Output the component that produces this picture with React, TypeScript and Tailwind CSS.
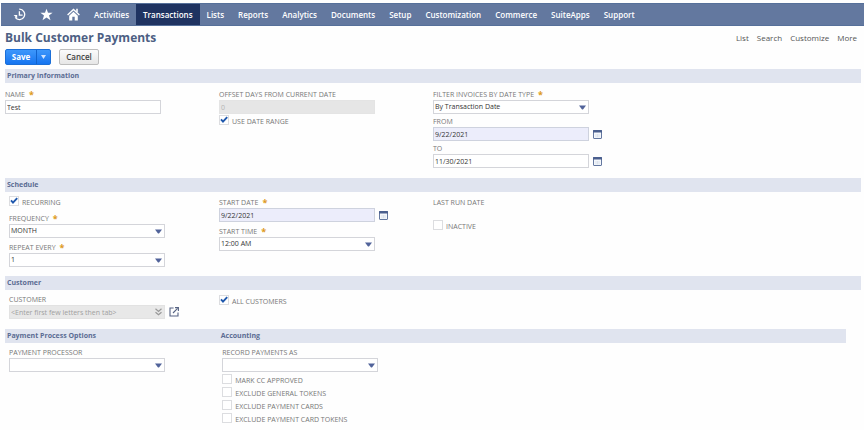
import { FC, ReactNode, useId, useState } from 'react';

const menuItems: string[] = [
  'Activities',
  'Transactions',
  'Lists',
  'Reports',
  'Analytics',
  'Documents',
  'Setup',
  'Customization',
  'Commerce',
  'SuiteApps',
  'Support',
];

const pageLinks: string[] = ['List', 'Search', 'Customize', 'More'];

const FieldLabel: FC<{ id?: string; text: string; required?: boolean }> = ({ id, text, required }) => (
  <label htmlFor={id} className="flex h-[10px] items-center whitespace-nowrap text-[7px] leading-[10px] text-[#777]">
    {text}
    {required && <span className="ml-1 text-[9px] font-bold leading-[8px] text-[#dd9a1c]">*</span>}
  </label>
);

const CalendarIcon: FC = () => (
  <svg width="9" height="9" viewBox="0 0 9 9" fill="none">
    <rect x="0.5" y="0.5" width="8" height="8" rx="0.5" fill="#f4f7fb" stroke="#6478a0" />
    <rect x="0" y="0" width="9" height="2.6" rx="0.5" fill="#4a5f8e" />
    <path d="M3 4v3.4M4.5 4v3.4M6 4v3.4" stroke="#c9d3e2" strokeWidth="0.6" />
  </svg>
);

interface TextFieldProps {
  label: string;
  value?: string;
  required?: boolean;
  disabled?: boolean;
  highlighted?: boolean;
  calendar?: boolean;
}

const TextField: FC<TextFieldProps> = ({ label, value = '', required, disabled, highlighted, calendar }) => {
  const id = useId();
  const [text, setText] = useState<string>(value);

  return (
    <div>
      <FieldLabel id={id} text={label} required={required} />
      <div className="flex items-center gap-1">
        <input
          id={id}
          type="text"
          value={text}
          disabled={disabled}
          onChange={(e) => setText(e.target.value)}
          className={`h-[14px] w-[156px] border px-[1px] text-[7px] leading-[12px] outline-none ${
            disabled
              ? 'border-[#e4e4e4] bg-[#e6e6e6] text-[#b5b5b5]'
              : highlighted
                ? 'border-[#ced2de] bg-[#ecedfb] text-[#333]'
                : 'border-[#d4d5da] bg-white text-[#333]'
          }`}
        />
        {calendar && (
          <button type="button" aria-label={`Pick ${label}`} className="cursor-pointer">
            <CalendarIcon />
          </button>
        )}
      </div>
    </div>
  );
};

interface SelectFieldProps {
  label: string;
  options: string[];
  required?: boolean;
}

const SelectField: FC<SelectFieldProps> = ({ label, options, required }) => {
  const id = useId();

  return (
    <div>
      <FieldLabel id={id} text={label} required={required} />
      <div className="relative w-[156px]">
        <select
          id={id}
          className="block h-[14px] w-full appearance-none border border-[#d4d5da] bg-white px-[1px] text-[7px] leading-[12px] text-[#333] outline-none"
        >
          {options.map((option) => (
            <option key={option}>{option}</option>
          ))}
        </select>
        <svg width="7" height="5" viewBox="0 0 7 5" className="pointer-events-none absolute right-[3px] top-[5px]">
          <path d="M0 0.4h7L4.2 4.2q-0.7 0.7-1.4 0z" fill="#51639a" />
        </svg>
      </div>
    </div>
  );
};

const CheckField: FC<{ label: string; checked?: boolean }> = ({ label, checked = false }) => {
  const [value, setValue] = useState<boolean>(checked);

  return (
    <label className="flex h-[13px] items-start gap-[3px] whitespace-nowrap text-[7px] leading-[14px] text-[#777]">
      <span className="relative block size-[10px]">
        <input
          type="checkbox"
          checked={value}
          onChange={(e) => setValue(e.target.checked)}
          className="block size-[10px] appearance-none border border-[#dcdde0] bg-white"
        />
        {value && (
          <svg width="8" height="8" viewBox="0 0 8 8" fill="none" className="pointer-events-none absolute left-[1px] top-[1px]">
            <path d="M1 3.4l2 2.2L7.2 1.2" stroke="#1f58ad" strokeWidth="1.9" />
          </svg>
        )}
      </span>
      {label}
    </label>
  );
};

const SectionBar: FC<{ children: ReactNode }> = ({ children }) => (
  <h2 className="h-[14px] bg-[#e0e4ef] pl-[2px] text-[7px] font-bold leading-[14px] text-[#5b6c93]">{children}</h2>
);

const App: FC = () => {
  return (
    <div className="min-h-screen bg-[#fefefe] pt-[3px] font-['Open_Sans','Noto_Sans',sans-serif]">
      <nav className="ml-[1px] flex h-[23px] items-stretch border-y border-[#56709a] bg-[#63789f] pl-[5px] text-[8px] font-semibold text-white">
        <a href="#" aria-label="Recent records" className="flex items-center px-[7px]">
          <svg width="13" height="13" viewBox="0 0 13 13" fill="none" stroke="#fff" strokeWidth="1.3">
            <path d="M6.2 1.2A5.2 5.2 0 1 1 2.2 9.4" />
            <path d="M6.4 3.2v4h3.2" />
            <path d="M0.6 7h3.6v3.4z" fill="#fff" stroke="none" />
          </svg>
        </a>
        <a href="#" aria-label="Shortcuts" className="flex items-center px-[7px]">
          <svg width="13" height="13" viewBox="0 0 13 13" fill="#fff">
            <path d="M6.5 0.8l1.5 4h4.6L9 7.5l1.5 4.7-4-2.8-4 2.8L4 7.5 0.4 4.8H5z" />
          </svg>
        </a>
        <a href="#" aria-label="Home" className="flex items-center px-[7px]">
          <svg width="13" height="13" viewBox="0 0 13 13" fill="none" stroke="#fff">
            <path d="M0.6 7L6.5 1.4 12.4 7" strokeWidth="1.4" />
            <path d="M10 0.8v3.4" strokeWidth="1.6" />
            <path d="M2.2 7.8l4.3-4 4.3 4v4.8H7.7V8.8H5.3v3.8H2.2z" fill="#fff" stroke="none" />
          </svg>
        </a>
        {menuItems.map((item) => (
          <a
            key={item}
            href="#"
            className={`flex items-center px-[7px] ${item === 'Transactions' ? 'bg-[#1f3361]' : ''}`}
          >
            {item}
          </a>
        ))}
      </nav>

      <main className="pl-[5px] pr-[3px]">
        <div className="flex h-[23px] items-center justify-between pr-1">
          <h1 className="text-[12px] font-bold text-[#4d5f83]">Bulk Customer Payments</h1>
          <div className="flex gap-2 text-[8px] text-[#555]">
            {pageLinks.map((link) => (
              <a key={link} href="#">
                {link}
              </a>
            ))}
          </div>
        </div>

        <div className="mb-1 flex h-4 gap-2 text-[8px]">
          <div className="flex rounded-[2px] border border-[#1b6fd8] bg-linear-to-b from-[#3d97fb] to-[#1575f0] font-bold text-white">
            <button type="button" className="w-[31px] border-r border-[#1263cc]">
              Save
            </button>
            <button type="button" aria-label="More save options" className="flex w-[13px] items-center justify-center">
              <svg width="5" height="4" viewBox="0 0 5 4" fill="#cfe4ff">
                <path d="M0 0h5L2.5 4z" />
              </svg>
            </button>
          </div>
          <button
            type="button"
            className="w-10 rounded-[2px] border border-[#bdbdbd] bg-linear-to-b from-[#fbfbfb] to-[#e6e6e6] font-semibold text-[#444]"
          >
            Cancel
          </button>
        </div>

        <SectionBar>Primary Information</SectionBar>
        <div className="grid grid-cols-4 pb-[10px] pt-[7px]">
          <TextField label="NAME" value="Test" required />
          <div className="flex flex-col gap-[1px]">
            <TextField label="OFFSET DAYS FROM CURRENT DATE" value="0" disabled />
            <CheckField label="USE DATE RANGE" checked />
          </div>
          <div className="flex flex-col gap-[3px]">
            <SelectField label="FILTER INVOICES BY DATE TYPE" options={['By Transaction Date', 'By Due Date']} required />
            <TextField label="FROM" value="9/22/2021" highlighted calendar />
            <TextField label="TO" value="11/30/2021" calendar />
          </div>
        </div>

        <SectionBar>Schedule</SectionBar>
        <div className="grid grid-cols-4 pb-[9px] pt-1">
          <div className="flex flex-col gap-[5px] pl-1">
            <CheckField label="RECURRING" checked />
            <SelectField label="FREQUENCY" options={['MONTH', 'WEEK', 'DAY']} required />
            <SelectField label="REPEAT EVERY" options={['1', '2', '3']} required />
          </div>
          <div className="flex flex-col gap-[5px] pt-[2px]">
            <TextField label="START DATE" value="9/22/2021" required highlighted calendar />
            <SelectField label="START TIME" options={['12:00 AM', '1:00 AM', '2:00 AM']} required />
          </div>
          <div className="flex flex-col gap-3 pt-[2px]">
            <FieldLabel text="LAST RUN DATE" />
            <CheckField label="INACTIVE" />
          </div>
        </div>

        <SectionBar>Customer</SectionBar>
        <div className="grid grid-cols-4 pb-[10px] pt-[5px]">
          <div className="pl-1">
            <FieldLabel id="customer" text="CUSTOMER" />
            <div className="flex items-center gap-1">
              <div className="relative w-[156px]">
                <input
                  id="customer"
                  type="text"
                  disabled
                  placeholder="<Enter first few letters then tab>"
                  className="block h-[14px] w-full border border-[#e2e2e2] bg-[#e8e8e8] px-[1px] text-[7px] leading-[12px] placeholder:text-[#a0a0a0]"
                />
                <svg
                  width="7"
                  height="8"
                  viewBox="0 0 7 8"
                  fill="none"
                  stroke="#999"
                  strokeWidth="1.2"
                  className="pointer-events-none absolute right-[3px] top-[3px]"
                >
                  <path d="M0.5 0.8l3 2.6 3-2.6M0.5 4.2l3 2.6 3-2.6" />
                </svg>
              </div>
              <button type="button" aria-label="Open customer">
                <svg width="10" height="10" viewBox="0 0 10 10" fill="none" stroke="#566383" strokeWidth="1.1">
                  <path d="M4.6 1H1v8h8V5.6" />
                  <path d="M4 6l4.6-4.6" />
                  <path d="M6 0.6h3.4V4" />
                </svg>
              </button>
            </div>
          </div>
          <CheckField label="ALL CUSTOMERS" checked />
        </div>

        <div className="mr-[15px]">
          <div className="grid h-[14px] grid-cols-4 gap-4 bg-[#e0e4ef] pl-[2px] text-[7px] font-bold leading-[14px] text-[#5b6c93]">
            <h2>Payment Process Options</h2>
            <h2>Accounting</h2>
          </div>
          <div className="grid grid-cols-4 gap-4 pl-1 pt-[5px]">
            <SelectField label="PAYMENT PROCESSOR" options={['']} />
            <div>
              <SelectField label="RECORD PAYMENTS AS" options={['']} />
              <div className="pt-[2px]">
                <CheckField label="MARK CC APPROVED" />
                <CheckField label="EXCLUDE GENERAL TOKENS" />
                <CheckField label="EXCLUDE PAYMENT CARDS" />
                <CheckField label="EXCLUDE PAYMENT CARD TOKENS" />
              </div>
            </div>
          </div>
        </div>
      </main>
    </div>
  );
};

export default App;
